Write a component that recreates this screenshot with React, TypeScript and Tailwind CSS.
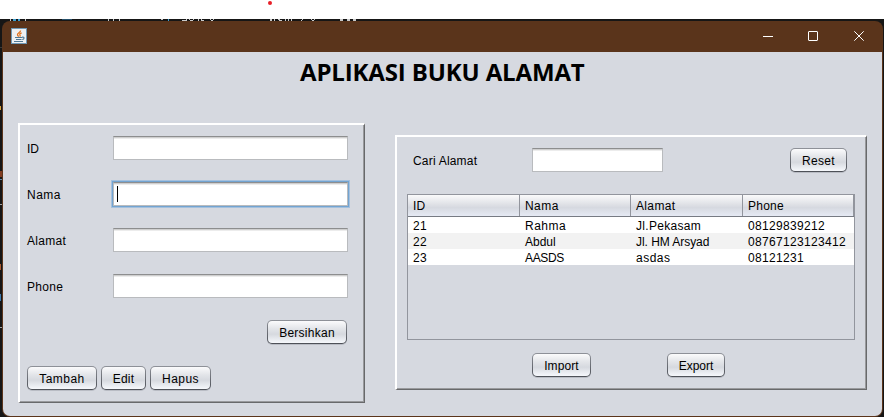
import type { ReactNode } from "react";

function Panel({ className, children }: { className: string; children: ReactNode }) {
  return (
    <div
      className={`flex flex-col border-t-2 border-l-2 border-t-white border-l-white border-r border-b border-r-[#68696b] border-b-[#68696b] shadow-[inset_-1px_-1px_0_#999a9d] ${className}`}
    >
      {children}
    </div>
  );
}

function Button({ className, children }: { className: string; children: ReactNode }) {
  return (
    <button
      className={`flex h-6 shrink-0 items-center justify-center rounded-[5px] bg-linear-to-b from-[#8f9299] to-[#4d5057] p-px pb-[1.5px] shadow-[0_1px_0_#b9bcc4] ${className}`}
    >
      <span className="flex h-full w-full items-center justify-center rounded-[4px] bg-[linear-gradient(#fbfbfc_0%,#e3e5e9_35%,#d6d9df_60%,#f6f8fc_100%)] pt-[2px] whitespace-nowrap">
        {children}
      </span>
    </button>
  );
}

function Field({ className, focused }: { className: string; focused?: boolean }) {
  return (
    <div
      className={`flex h-6 shrink-0 items-center border border-[#b9bbbe] border-t-[#8d8e8f] bg-white pl-[3px] ${
        focused
          ? "shadow-[inset_0_1px_0_#cfcfcf,inset_0_2px_0_#ececec,0_0_0_1px_#73a4d1,0_0_0_2px_#a5c1de]"
          : "shadow-[inset_0_1px_0_#cfcfcf,inset_0_2px_0_#ececec]"
      } ${className}`}
    >
      {focused && <span className="h-4 w-px bg-black" />}
    </div>
  );
}

function FormRow({ label, tracking, focused }: { label: string; tracking: string; focused?: boolean }) {
  return (
    <div className="flex h-6 items-center">
      <span className={`w-[86px] pt-[2px] ${tracking}`}>{label}</span>
      <Field className="w-[235px]" focused={focused} />
    </div>
  );
}

function JavaIcon() {
  return (
    <svg width="16" height="16" viewBox="0 0 16 16" fill="none">
      <rect x=".5" y=".5" width="15" height="15" fill="#eef0f2" stroke="#6f98b5" />
      <path d="M9.6 2.6C9.6 4.6 6.2 5 6.5 6.8c.1.8.8 1.2 1.2 1.8M10.6 5C8.9 5.4 8.4 6 9 7c.4.6.1 1.1-.3 1.5" stroke="#e2741f" strokeWidth="1.3" />
      <path d="M4 9.5h7M5 11.5h5.5M11 9.2c2.8-.7 2.6 1.9.2 2.3M3 13.5h9" stroke="#4f7893" strokeWidth="1.1" />
    </svg>
  );
}

const headers = [
  { text: "ID", tracking: "tracking-[0.2px]" },
  { text: "Nama", tracking: "tracking-[0.45px]" },
  { text: "Alamat", tracking: "tracking-[0.35px]" },
  { text: "Phone", tracking: "tracking-[0.25px]" },
];

const digits = "tracking-[0.33px]";

const rows = [
  {
    fill: "bg-white",
    cells: [
      { text: "21", tracking: digits },
      { text: "Rahma", tracking: "tracking-[0.5px]" },
      { text: "Jl.Pekasam", tracking: "tracking-[0.3px]" },
      { text: "08129839212", tracking: digits },
    ],
  },
  {
    fill: "bg-[#f2f2f2]",
    cells: [
      { text: "22", tracking: digits },
      { text: "Abdul", tracking: "tracking-normal" },
      { text: "Jl. HM Arsyad", tracking: "tracking-[-0.05px]" },
      { text: "08767123123412", tracking: digits },
    ],
  },
  {
    fill: "bg-white",
    cells: [
      { text: "23", tracking: digits },
      { text: "AASDS", tracking: "tracking-[-0.35px]" },
      { text: "asdas", tracking: "tracking-[0.5px]" },
      { text: "08121231", tracking: digits },
    ],
  },
];

export default function App() {
  return (
    <div className="flex h-[417px] w-[884px] flex-col overflow-hidden bg-white font-['Liberation_Sans',Arial,sans-serif] text-[12px] leading-4 text-black">
      <div className="h-[19px] pt-px pl-[268px]">
        <div className="size-1 rounded-full bg-[#e81f27]" />
      </div>
      <div className="flex flex-1 flex-col bg-[#161616]">
        {/* Sliver of the desktop behind the window */}
        <div className="flex h-0.5 shrink-0 pl-[10px]">
          <svg width="360" height="2" viewBox="0 0 360 2">
            <path d="M0 0h1v2H0zM15 0h1v2h-1zM98 0h1v2h-1zM103 0h1v2h-1zM109 0h1v2h-1zM151 0h2v1h-2z" fill="#c8c8c8" />
            <path d="M3 0h3v2H3zM8 0h2v2H8zM158 0h1v2h-1z" fill="#3c9fd0" />
            <path d="M52 0h10v1H52z" fill="#27506a" />
            <path d="M172 1h5v1h-5zM176 0h1v1h-1zM179 0h1v1h-1zM180 1h3v1h-3zM183 0h1v1h-1zM188 0h1v2h-1zM191 0h1v2h-1zM192 1h2v1h-2zM200 0h1v1h-1zM201 1h2v1h-2zM203 0h1v1h-1zM260 0h2v2h-2zM264 0h1v2h-1zM268 0h2v1h-2zM269 1h3v1h-3zM275 0h1v2h-1zM278 0h1v2h-1zM281 0h1v2h-1zM292 0h1v1h-1zM291 1h1v1h-1zM301 0h1v1h-1zM302 1h2v1h-2zM304 0h1v1h-1zM330 0h3v2h-3zM337 0h3v2h-3zM343 0h3v2h-3z" fill="#c9c9c9" />
          </svg>
        </div>
        <div className="flex flex-1">
          <div className="flex w-0.5 flex-col">
            <span className="mt-[26px] h-px bg-[#3a3a3a]" />
            <span className="mt-[58px] h-1 w-px bg-[#d9a13b]" />
            <span className="mt-[61px] h-1.5 bg-[#803c22]" />
            <span className="mt-[2px] h-px bg-[#5d86a8]" />
            <span className="mt-[24px] h-px bg-[#a0a0a0]" />
            <span className="mt-[59px] h-1.5 w-px bg-[#ad5b34]" />
            <span className="mt-[24px] h-[7px] w-px bg-[#3f79ad]" />
            <span className="mt-[26px] h-px bg-[#a0a0a0]" />
          </div>
          <div className="mr-px flex flex-1 flex-col overflow-hidden rounded-[8px] bg-[#5a341b] px-px pb-px">
            <div className="flex h-[31px] shrink-0 items-center pl-2">
              <div className="-mt-0.5">
                <JavaIcon />
              </div>
              <svg className="ml-auto" width="120" height="31" viewBox="0 0 120 31" fill="none" stroke="#fff">
                <path d="M1 15.5h10" />
                <rect x="46.5" y="10.5" width="9" height="9" rx=".5" />
                <path d="M92.3 10.3l9.4 9.4M101.7 10.3l-9.4 9.4" />
              </svg>
            </div>
            <div className="flex flex-1 flex-col rounded-b-[7px] bg-[#d6d9e0]">
              <h1 className="mt-[4px] h-8 w-full pl-[297px] text-left font-['Open_Sans','Noto_Sans',sans-serif] text-[24px] leading-8 font-bold tracking-[-0.14px] whitespace-nowrap">
                APLIKASI BUKU ALAMAT
              </h1>
              <div className="flex items-start pl-[15px]">
                <Panel className="mt-[35px] h-[280px] w-[347px] pt-[11px] pl-[7px]">
                  <div className="flex flex-col gap-[22px]">
                    <FormRow label="ID" tracking="tracking-normal" />
                    <FormRow label="Nama" tracking="tracking-[0.5px]" focused />
                    <FormRow label="Alamat" tracking="tracking-[0.3px]" />
                    <FormRow label="Phone" tracking="tracking-[0.3px]" />
                  </div>
                  <div className="mt-[22px] flex justify-end pr-[17px]">
                    <Button className="w-20 tracking-[0.25px]">Bersihkan</Button>
                  </div>
                  <div className="mt-[22px] flex gap-1">
                    <Button className="w-[70px] tracking-[0.45px]">Tambah</Button>
                    <Button className="w-[45px] tracking-[0.2px]">Edit</Button>
                    <Button className="w-[61px] tracking-[0.45px]">Hapus</Button>
                  </div>
                </Panel>
                <Panel className="mt-[47px] ml-[30px] h-[255px] w-[472px] pt-[11px] pl-[10px]">
                  <div className="flex items-center pl-[6px]">
                    <span className="w-[119px] pt-[2px] tracking-[0.2px]">Cari Alamat</span>
                    <Field className="w-[131px]" />
                    <Button className="ml-[127px] w-[57px] tracking-[0.35px]">Reset</Button>
                  </div>
                  <div className="mt-[22px] h-[146px] w-[448px] shrink-0 border border-[#92959d]">
                    <div className="grid h-[22px] grid-cols-[112px_111px_112px_111px] border-b border-[#777b83] bg-[linear-gradient(#fafafb_0%,#dfe1e6_45%,#d6d9e0_60%,#e6eaf4_100%)]">
                      {headers.map(({ text, tracking }) => (
                        <span key={text} className={`border-r border-[#92959d] pt-[3px] pl-[5px] ${tracking}`}>
                          {text}
                        </span>
                      ))}
                    </div>
                    {rows.map(({ fill, cells }) => (
                      <div key={cells[0].text} className={`grid h-4 grid-cols-[112px_111px_112px_111px] ${fill}`}>
                        {cells.map(({ text, tracking }) => (
                          <span key={text} className={`pt-px pl-[5px] whitespace-nowrap ${tracking}`}>
                            {text}
                          </span>
                        ))}
                      </div>
                    ))}
                  </div>
                  <div className="mt-[13px] flex pl-[125px]">
                    <Button className="w-[59px] tracking-[0.1px]">Import</Button>
                    <Button className="ml-[76px] w-[58px]">Export</Button>
                  </div>
                </Panel>
              </div>
            </div>
          </div>
        </div>
      </div>
    </div>
  );
}
